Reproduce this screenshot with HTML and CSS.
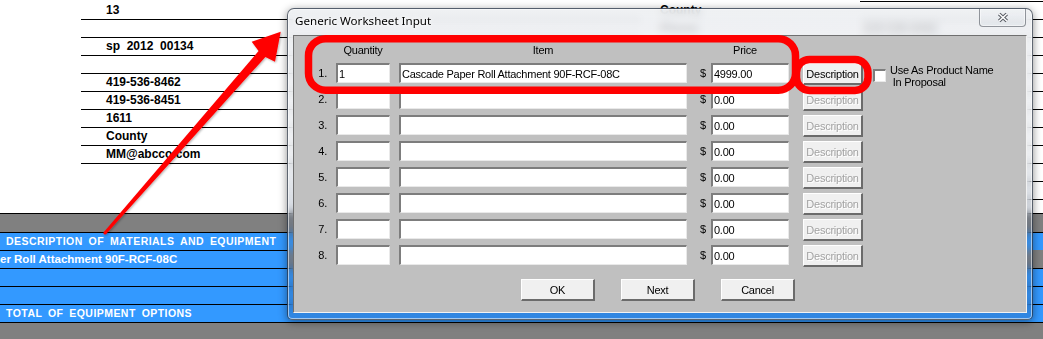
FILE: index.html
```html
<!DOCTYPE html>
<html>
<head>
<meta charset="utf-8">
<title>Generic Worksheet Input</title>
<link rel="stylesheet" href="styles.css">
</head>
<body>
<div class="page">
  <div class="sheet-top">
    <div class="col-left">
      <div class="cell">13</div>
      <div class="cell"></div>
      <div class="cell">sp  2012  00134</div>
      <div class="cell"></div>
      <div class="cell">419-536-8462</div>
      <div class="cell">419-536-8451</div>
      <div class="cell">1611</div>
      <div class="cell">County</div>
      <div class="cell">MM@abcco.com</div>
    </div>
    <div class="col-labels">
      <div class="label">County</div>
      <div class="label">Phone:</div>
    </div>
    <div class="col-right">
      <div class="cell"></div>
      <div class="cell">419-536-8462</div>
      <div class="cell"></div>
      <div class="cell"></div>
      <div class="cell"></div>
      <div class="cell"></div>
      <div class="cell"></div>
      <div class="cell"></div>
      <div class="cell"></div>
      <div class="cell"></div>
      <div class="cell"></div>
    </div>
  </div>
  <div class="band"></div>
  <div class="blue">
    <div class="brow">DESCRIPTION OF MATERIALS AND EQUIPMENT</div>
    <div class="brow item">er Roll Attachment 90F-RCF-08C</div>
    <div class="brow"></div>
    <div class="brow"></div>
    <div class="brow">TOTAL OF EQUIPMENT OPTIONS</div>
  </div>

  <div class="dialog">
    <div class="titlebar">
      <span class="title">Generic Worksheet Input</span>
      <span class="close">
        <svg width="12" height="11" viewBox="0 0 12 11">
          <path d="M2.2 2 L9.8 9 M9.8 2 L2.2 9" stroke="#5b5f66" stroke-width="3.6" fill="none"/>
          <path d="M2.2 2 L9.8 9 M9.8 2 L2.2 9" stroke="#ffffff" stroke-width="1.5" fill="none"/>
        </svg>
      </span>
    </div>
    <div class="client">
      <div class="row head">
        <span class="num"></span>
        <span class="h-qty">Quantity</span>
        <span class="h-item">Item</span>
        <span class="h-dollar"></span>
        <span class="h-price">Price</span>
      </div>
      <div class="row">
        <span class="num">1.</span>
        <input class="field qty" type="text" value="1">
        <input class="field item" type="text" value="Cascade Paper Roll Attachment 90F-RCF-08C">
        <span class="dollar">$</span>
        <input class="field price" type="text" value="4999.00">
        <button class="btn desc">Description</button>
        <span class="check"></span>
        <span class="check-label">Use As Product Name<br>&nbsp;In Proposal</span>
      </div>
      <div class="row">
        <span class="num">2.</span>
        <input class="field qty" type="text" value="">
        <input class="field item" type="text" value="">
        <span class="dollar">$</span>
        <input class="field price" type="text" value="0.00">
        <button class="btn desc off" disabled>Description</button>
      </div>
      <div class="row">
        <span class="num">3.</span>
        <input class="field qty" type="text" value="">
        <input class="field item" type="text" value="">
        <span class="dollar">$</span>
        <input class="field price" type="text" value="0.00">
        <button class="btn desc off" disabled>Description</button>
      </div>
      <div class="row">
        <span class="num">4.</span>
        <input class="field qty" type="text" value="">
        <input class="field item" type="text" value="">
        <span class="dollar">$</span>
        <input class="field price" type="text" value="0.00">
        <button class="btn desc off" disabled>Description</button>
      </div>
      <div class="row">
        <span class="num">5.</span>
        <input class="field qty" type="text" value="">
        <input class="field item" type="text" value="">
        <span class="dollar">$</span>
        <input class="field price" type="text" value="0.00">
        <button class="btn desc off" disabled>Description</button>
      </div>
      <div class="row">
        <span class="num">6.</span>
        <input class="field qty" type="text" value="">
        <input class="field item" type="text" value="">
        <span class="dollar">$</span>
        <input class="field price" type="text" value="0.00">
        <button class="btn desc off" disabled>Description</button>
      </div>
      <div class="row">
        <span class="num">7.</span>
        <input class="field qty" type="text" value="">
        <input class="field item" type="text" value="">
        <span class="dollar">$</span>
        <input class="field price" type="text" value="0.00">
        <button class="btn desc off" disabled>Description</button>
      </div>
      <div class="row">
        <span class="num">8.</span>
        <input class="field qty" type="text" value="">
        <input class="field item" type="text" value="">
        <span class="dollar">$</span>
        <input class="field price" type="text" value="0.00">
        <button class="btn desc off" disabled>Description</button>
      </div>
      <div class="actions">
        <button class="btn action">OK</button>
        <button class="btn action">Next</button>
        <button class="btn action">Cancel</button>
      </div>
    </div>
  </div>

  <svg class="marks" width="1043" height="339" viewBox="0 0 1043 339">
    <defs>
      <filter id="sh" x="-10%" y="-10%" width="120%" height="120%">
        <feDropShadow dx="1" dy="1" stdDeviation="1" flood-color="#000" flood-opacity="0.3"/>
      </filter>
    </defs>
    <rect x="308.5" y="38.7" width="487" height="51.5" rx="17" fill="none" stroke="#ff0000" stroke-width="7.5"/>
    <rect x="796.5" y="59.5" width="71.5" height="31" rx="13" fill="none" stroke="#ff0000" stroke-width="7.5"/>
    <g filter="url(#sh)">
      <polygon points="103.9,232 258.6,51 251.7,41.7 280.7,31.7 275,61.7 265.4,57 106.1,234" fill="#ff0000"/>
      <circle cx="105" cy="233" r="1.6" fill="#ff0000"/>
    </g>
  </svg>
</div>
</body>
</html>
```

FILE: styles.css
```css
html, body {
  margin: 0;
  padding: 0;
}

body {
  width: 1043px;
  height: 339px;
  overflow: hidden;
  background: #808080;
  font-family: "Liberation Sans", Arial, sans-serif;
}

.page {
  position: relative;
  width: 1043px;
  height: 339px;
  overflow: hidden;
  background: #808080;
}

/* ---------- background worksheet ---------- */
.sheet-top {
  height: 213px;
  box-sizing: border-box;
  padding-top: 1px;
  background: #ffffff;
  display: flex;
  align-items: flex-start;
}

.col-left {
  margin-left: 81px;
  width: 560px;
  padding-top: 1px;
}

.cell {
  height: 17px;
  border-bottom: 1px solid #000;
  padding-left: 25px;
  font: bold 12px/17px "Liberation Sans", Arial, sans-serif;
  color: #000;
  white-space: pre;
}

.col-labels {
  margin-left: 19px;
  width: 200px;
  padding-top: 1px;
}

.label {
  height: 18px;
  font: bold 12px/17px "Liberation Sans", Arial, sans-serif;
  color: #000;
}

.col-right {
  width: 183px;
  border-top: 1px solid #000;
}

.col-right .cell {
  padding-left: 3px;
}

.band {
  height: 18px;
  border-top: 1px solid #000;
  background: #808080;
}

.blue {
  border-bottom: 1px solid #000;
}

.brow {
  height: 17px;
  border-top: 1px solid #000;
  background: #3399ff;
  color: #ffffff;
  padding-left: 6px;
  font: bold 10.5px/17px "Liberation Sans", Arial, sans-serif;
  letter-spacing: 0.45px;
  word-spacing: 2.5px;
  white-space: nowrap;
}

.brow.item {
  padding-left: 0;
  font-size: 11.5px;
  letter-spacing: 0;
  word-spacing: 0;
}

/* ---------- dialog window ---------- */
.dialog {
  position: absolute;
  left: 287px;
  top: 8px;
  width: 746px;
  height: 312px;
  box-sizing: border-box;
  border: 1px solid rgba(35, 45, 60, 0.7);
  border-radius: 7px 7px 5px 5px;
  background: linear-gradient(to bottom,
      rgba(236, 238, 241, 0.86) 0%,
      rgba(230, 233, 237, 0.6) 45%,
      rgba(90, 110, 140, 0.25) 65%,
      rgba(40, 80, 140, 0.25) 100%);
  -webkit-backdrop-filter: blur(4px);
  backdrop-filter: blur(4px);
  box-shadow: inset 0 0 0 1px rgba(255, 255, 255, 0.55), 0 2px 9px rgba(0, 0, 0, 0.45);
}

.titlebar {
  height: 26px;
  display: flex;
  align-items: flex-start;
}

.title {
  padding-left: 7px;
  font: 11.6px/24px "Noto Sans", "Open Sans", sans-serif;
  color: #000;
  text-shadow: 0 0 6px #ffffff, 0 0 3px #ffffff;
}

.close {
  margin-left: auto;
  margin-right: 6px;
  width: 47px;
  height: 18px;
  box-sizing: border-box;
  border: 1px solid rgba(70, 75, 85, 0.55);
  border-top: none;
  border-radius: 0 0 4px 4px;
  background: linear-gradient(to bottom, rgba(240, 242, 245, 0.7), rgba(222, 226, 231, 0.7));
  box-shadow: inset 0 0 0 1px rgba(255, 255, 255, 0.5);
  display: flex;
  align-items: center;
  justify-content: center;
}

.close svg {
  display: block;
}

.client {
  margin: 0 5px;
  height: 278px;
  box-sizing: border-box;
  border: 1px solid;
  border-color: #6f6f6f #f2f2f2 #f2f2f2 #6f6f6f;
  background: #c0c0c0;
  font: 11px "Liberation Sans", Arial, sans-serif;
  letter-spacing: -0.25px;
  color: #000;
}

.row {
  display: flex;
  align-items: flex-start;
  height: 26px;
}

.row.head {
  height: 27px;
  box-sizing: border-box;
  padding-top: 7px;
  line-height: 14px;
}

.num {
  width: 42px;
  box-sizing: border-box;
  padding-right: 9px;
  text-align: right;
  line-height: 20px;
}

.h-qty {
  width: 54px;
  margin-right: 9px;
  text-align: center;
}

.h-item {
  width: 288px;
  text-align: center;
}

.h-dollar {
  width: 24px;
}

.h-price {
  width: 78px;
  box-sizing: border-box;
  padding-right: 10px;
  text-align: center;
}

.field {
  box-sizing: border-box;
  height: 20px;
  margin: 0;
  padding: 0 0 0 1px;
  border-style: solid;
  border-width: 2px 1px 1px 2px;
  border-color: #7d7d7d #e9e9e9 #e9e9e9 #7d7d7d;
  border-radius: 0;
  background: #ffffff;
  font: 11px "Liberation Sans", Arial, sans-serif;
  letter-spacing: -0.25px;
  color: #000;
  outline: none;
}

.qty {
  width: 54px;
  margin-right: 9px;
}

.item {
  width: 288px;
}

.dollar {
  width: 24px;
  box-sizing: border-box;
  padding-left: 13px;
  line-height: 20px;
}

.price {
  width: 78px;
}

.btn {
  box-sizing: border-box;
  height: 22px;
  margin: 0;
  padding: 0;
  border-style: solid;
  border-width: 1px 2px 2px 1px;
  border-color: #ffffff #6b6b6b #6b6b6b #ffffff;
  border-radius: 0;
  background: #f0f0f0;
  font: 11px "Liberation Sans", Arial, sans-serif;
  letter-spacing: -0.25px;
  color: #000;
}

.desc {
  width: 60px;
  margin-left: 14px;
}

.btn.off {
  color: #a2a2a2;
  text-shadow: 1px 1px 0 #ffffff;
}

.check {
  width: 13px;
  height: 13px;
  box-sizing: border-box;
  margin: 6px 0 0 10px;
  border-style: solid;
  border-width: 2px 1px 1px 2px;
  border-color: #7d7d7d #e9e9e9 #e9e9e9 #7d7d7d;
  background: #ffffff;
}

.check-label {
  margin: 1px 0 0 4px;
  line-height: 12px;
  white-space: nowrap;
}

.actions {
  display: flex;
  gap: 26px;
  margin-top: 8px;
  padding-left: 227px;
}

.action {
  width: 74px;
}

/* ---------- annotation overlay ---------- */
.marks {
  position: absolute;
  left: 0;
  top: 0;
  pointer-events: none;
}
```
